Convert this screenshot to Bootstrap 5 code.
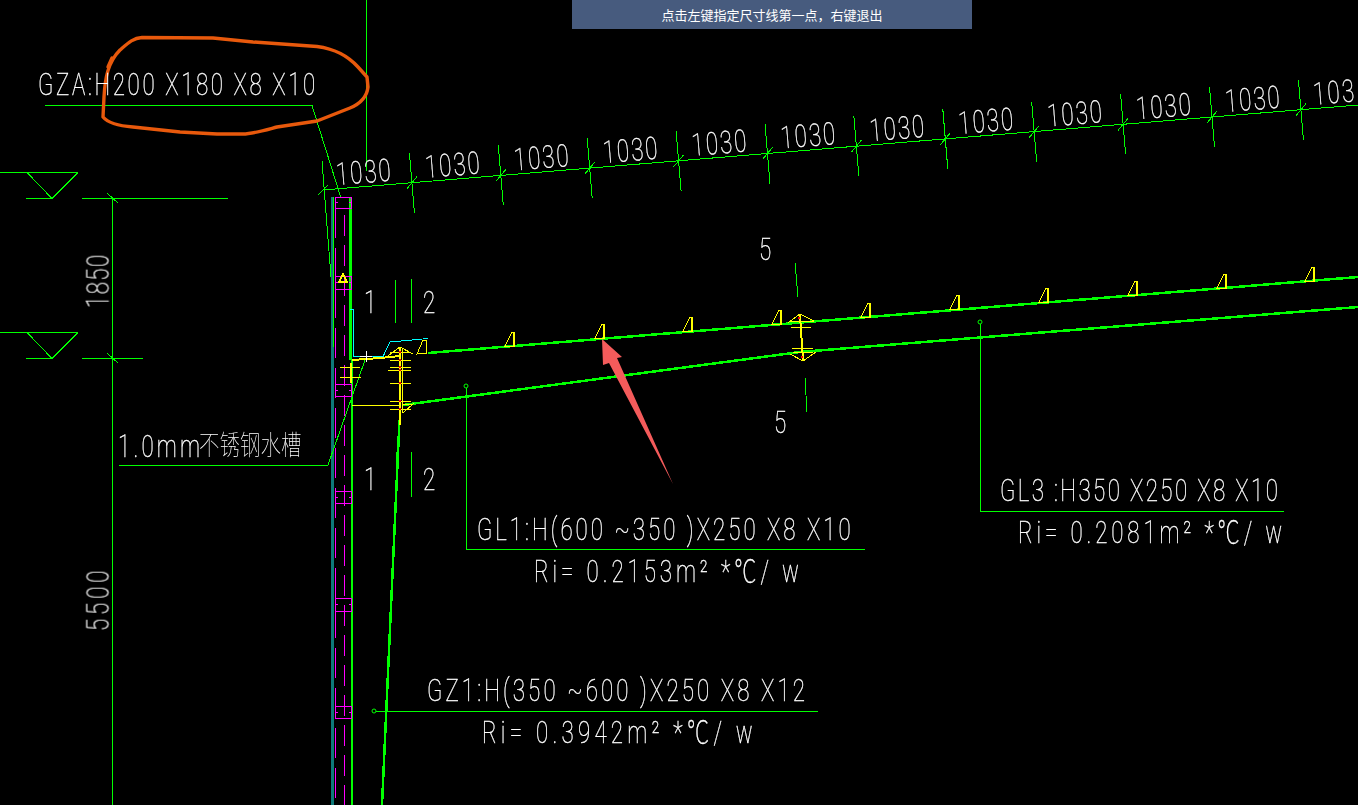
<!doctype html>
<html lang="zh-CN">
<head>
<meta charset="utf-8">
<title>CAD</title>
<link href="https://cdn.jsdelivr.net/npm/bootstrap@5.3.0/dist/css/bootstrap.min.css" rel="stylesheet">
<style>
html,body{margin:0;background:#000;overflow:hidden}
.cad-stage{width:1358px;height:805px;background:#000}
.cad-svg{display:block}
.cad-banner{top:0;left:572px;width:400px;height:29px;background:#475b7e;color:#fff;font:13px/29px "Noto Sans CJK SC","Liberation Sans",sans-serif}
.cad-banner-text{opacity:.999}
.g{stroke:#0f0;stroke-width:1;fill:none;shape-rendering:crispEdges}
.g2{stroke:#0f0;stroke-width:2.5;fill:none;shape-rendering:crispEdges}
.y{stroke:#ff0;stroke-width:1;fill:none;shape-rendering:crispEdges}
.y2{stroke:#ff0;stroke-width:2;fill:none;shape-rendering:crispEdges}
.m{stroke:#f0f;stroke-width:1;fill:none;shape-rendering:crispEdges}
.m2{stroke:#f0f;stroke-width:1.4;fill:none;shape-rendering:crispEdges}
.c{stroke:#0ff;stroke-width:1;fill:none;shape-rendering:crispEdges}
.pin{stroke:#0f0;stroke-width:1;fill:none}
.tlayer{opacity:.999}
.tx{font-family:Roboto,"Noto Sans CJK SC",sans-serif;font-weight:100;font-size:31px;fill:#fff;stroke:#fff;stroke-width:.4}
.cj{font-family:"Noto Sans CJK SC",sans-serif;font-weight:100;font-size:27px;fill:#fff}
.loop{fill:none;stroke:#e8590c;stroke-width:3.4;stroke-linejoin:round;stroke-linecap:round}
</style>
</head>
<body>
<div class="cad-stage position-relative overflow-hidden">
<svg class="cad-svg" width="1358" height="805" viewBox="0 0 1358 805" xmlns="http://www.w3.org/2000/svg">
  <g id="geo"></g>
  <path class="loop" d="M104 97C105 78 108 62 120 50C128 43 133 38 142 37.500L213 38L253 42L317 46.500C335 49 347 55 358 67L367 77L368 87C367 96 362 103 350 108L317 121L277 127C262 131 252 134 243 134L217 134L180 132L133 127C120 126 108 123 103 117Z"/>
  <path class="loop" d="M108 67L112 58"/>
  <polygon points="602,339 603,365 609,363 673,484 617,358 622,357" fill="#f45b5b"/>

  <g class="tlayer">
  <text class="tx" transform="translate(38 95) scale(.72 1)" textLength="385">GZA:H200 X180 X8 X10</text>
  <text class="tx" transform="translate(477 540) scale(.72 1)" textLength="519">GL1:H(600 ~350 )X250 X8 X10</text>
  <text class="tx" transform="translate(534 582) scale(.72 1)" textLength="368">Ri= 0.2153m² *℃/ w</text>
  <text class="tx" transform="translate(1000 501) scale(.72 1)" textLength="386">GL3 :H350 X250 X8 X10</text>
  <text class="tx" transform="translate(1018 543) scale(.72 1)" textLength="367">Ri= 0.2081m² *℃/ w</text>
  <text class="tx" transform="translate(427 701) scale(.72 1)" textLength="525">GZ1:H(350 ~600 )X250 X8 X12</text>
  <text class="tx" transform="translate(482 743) scale(.72 1)" textLength="376">Ri= 0.3942m² *℃/ w</text>
  <text class="tx" transform="translate(118 457) scale(.72 1)" textLength="114">1.0mm</text>
  <text class="cj" transform="translate(199 455) scale(.76 1)" textLength="135">不锈钢水槽</text>

  <text class="tx" transform="translate(108.500 308) rotate(-90) scale(.72 1)" textLength="74">1850</text>
  <text class="tx" transform="translate(108.500 631) rotate(-90) scale(.72 1)" textLength="84">5500</text>

  <text class="tx" transform="translate(364 313) scale(.72 1)">1</text>
  <text class="tx" transform="translate(423 313) scale(.72 1)">2</text>
  <text class="tx" transform="translate(364 490) scale(.72 1)">1</text>
  <text class="tx" transform="translate(423 490) scale(.72 1)">2</text>
  <text class="tx" transform="translate(759 260) scale(.72 1)">5</text>
  <text class="tx" transform="translate(774 433) scale(.72 1)">5</text>

  <text class="tx" transform="translate(337 185) rotate(-4.7) scale(.72 1)" textLength="76">1030</text>
  <text class="tx" transform="translate(426 177.700) rotate(-4.7) scale(.72 1)" textLength="76">1030</text>
  <text class="tx" transform="translate(514.800 170.400) rotate(-4.7) scale(.72 1)" textLength="76">1030</text>
  <text class="tx" transform="translate(603.700 163.100) rotate(-4.7) scale(.72 1)" textLength="76">1030</text>
  <text class="tx" transform="translate(692.600 155.800) rotate(-4.7) scale(.72 1)" textLength="76">1030</text>
  <text class="tx" transform="translate(781.500 148.500) rotate(-4.7) scale(.72 1)" textLength="76">1030</text>
  <text class="tx" transform="translate(870.400 141.200) rotate(-4.7) scale(.72 1)" textLength="76">1030</text>
  <text class="tx" transform="translate(959.300 133.900) rotate(-4.7) scale(.72 1)" textLength="76">1030</text>
  <text class="tx" transform="translate(1048.200 126.600) rotate(-4.7) scale(.72 1)" textLength="76">1030</text>
  <text class="tx" transform="translate(1137.100 119.300) rotate(-4.7) scale(.72 1)" textLength="76">1030</text>
  <text class="tx" transform="translate(1226 112) rotate(-4.7) scale(.72 1)" textLength="76">1030</text>
  <text class="tx" transform="translate(1314 104.700) rotate(-4.7) scale(.72 1)" textLength="57">103</text>
  </g>
</svg>
<div class="cad-banner position-absolute text-center"><div class="cad-banner-text">点击左键指定尺寸线第一点，右键退出</div></div>
</div>
<script>
(function(){
  var out=[];
  function L(c,x1,y1,x2,y2){out.push('<line class="'+c+'" x1="'+x1+'" y1="'+y1+'" x2="'+x2+'" y2="'+y2+'"/>');}
  function P(c,d){out.push('<path class="'+c+'" d="'+d+'"/>');}
  function dot(x,y){out.push('<circle class="pin" cx="'+x+'" cy="'+y+'" r="2"/>');}
  function red(x,y){out.push('<rect x="'+(x-1)+'" y="'+(y-1)+'" width="2" height="2" fill="#f00"/>');}
  L('g',366.5,0,366.5,171);
  L('g',45,105.5,312,105.5); L('g',312,105.5,341,198);
  L('g',323,190,1358,105);
  L('g',322,161,331,277);
  L('g',318,195,328,185);
  for(var i=1;i<12;i++){
    var x=323+88.9*i, y=190-0.0821*(x-323);
    L('g',x-2.5,y-30,x+2.5,y+30);
    L('g',x-5,y+6,x+5,y-6);
  }
  [172.5,332.5].forEach(function(y){
    L('g',0,y,78,y);
    P('g','M27 '+y+'L52 '+(y+26)+'L78 '+y);
    L('g',26,y+26,52,y+26);
  });
  L('g',112.5,198,112.5,805);
  L('g',82,198.5,228,198.5); L('g',82,358.5,143,358.5);
  L('g',107,193,118,203); L('g',107,353,118,363);
  L('g2',350.5,197,350.5,360); L('g2',352,360,352,805);
  out.push('<rect x="331" y="197" width="3" height="608" fill="#0d7a7a"/>');
  out.push('<rect x="333" y="197" width="1" height="150" fill="#0f0"/>');
  for(var k=208;k<805;k+=40){L('m2',335.5,k,335.5,k+30);}
  for(var k=215;k<805;k+=30){L('m2',344.5,k,344.5,k+21);}
  [[197,208],[276,289],[384,396.5],[491.5,503],[598,611],[706.5,718]].forEach(function(b){
    out.push('<rect class="m" x="335.5" y="'+b[0]+'" width="16" height="'+(b[1]-b[0])+'"/>');
    var m=(b[0]+b[1])/2;
    L('m',336,m,338,m); L('m',349,m,351,m);
  });
  P('y2','M339 282L347 282L343 274Z');
  P('c','M350 309.500H353.500V356.500H383L390 342L428 338.500');
  L('g2',428,353,1358,277);
  L('g2',403,405,800,352); L('g2',800,352,1358,307);
  L('g2',399.500,420,382,805);
  L('g',395.5,280,395.5,323); L('g',411.5,279,411.5,323);
  L('g',396.5,452,396.5,495); L('g',411.5,452,411.5,497);
  L('g',795,263,798,297); L('g',805,378,807,412);
  L('g',365,360,328,465); L('g',119,465.5,328,465.5);
  [510,600,688,777,866,955,1044,1133,1222,1310].forEach(function(x){
    var y=Math.round(309-(x-960)*0.0812);
    P('y','M'+(x-5)+' '+y+'L'+(x+4)+' '+y+'V'+(y-14)+'H'+(x+2)+'Z');
    L('y',x+3.5,y-13,x+3.5,y);
  });
  L('y2',352,360,380,358); L('y2',380,358,400,356);
  L('y2',400,348,400,425); L('y',402.5,348,402.5,413);
  [352,360,367,370,383,401,409].forEach(function(y,i){L('y',i==3?388:390,y+.5,411,y+.5);red(400,y);});
  P('y','M388 356L400 347L413 354M403 405L413 404L403 413');
  L('y',352,405.5,400,405.5);
  L('y',340,367.5,360,367.5); L('y',340,377.5,361,377.5);
  L('y2',351,363,351,383);
  P('y','M417 354L427 353L426 340H423Z');
  L('y2',800,315,803,360);
  [[791,811,327],[791,814,321],[792,813,348],[793,813,352]].forEach(function(a){L('y',a[0],a[2]+.5,a[1],a[2]+.5);});
  P('y','M788 323L800 314L814 321M790 354L803 361L816 352');
  red(799,318);red(802,357);
  dot(466,386); L('g',466.5,388,466.5,549); L('g',466,549.5,865,549.5);
  dot(980,322); L('g',980.5,324,980.5,511); L('g',980,511.5,1284,511.5);
  dot(374,711); L('g',376,711.5,818,711.5);
  out.push('<path d="M366 351V362M360 356.500H372" stroke="#fff" fill="none" shape-rendering="crispEdges"/>');
  document.getElementById('geo').innerHTML=out.join('');
})();
</script>
<script src="https://cdn.jsdelivr.net/npm/bootstrap@5.3.0/dist/js/bootstrap.bundle.min.js"></script>
</body>
</html>
